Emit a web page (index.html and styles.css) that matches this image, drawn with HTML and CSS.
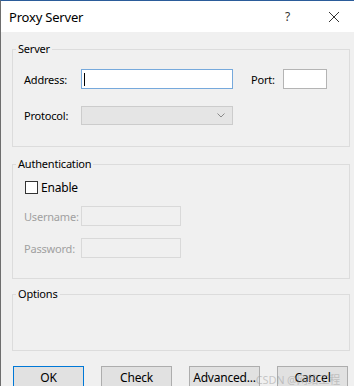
FILE: index.html
```html
<!DOCTYPE html>
<html lang="en">
<head>
    <meta charset="UTF-8">
    <title>Proxy Server</title>
    <link rel="stylesheet" href="styles.css">
</head>
<body>
    <div class="window">
        <div class="titlebar">
            <span class="title">Proxy Server</span>
            <span class="help">?</span>
            <span class="close">
                <svg width="12" height="12" viewBox="0 0 12 12"><path d="M1 1L11 11M11 1L1 11" stroke="#333" stroke-width="1" fill="none"/></svg>
            </span>
        </div>
        <div class="dialog">
            <fieldset class="group server">
                <legend>Server</legend>
                <div class="row">
                    <label class="lbl">Address:</label>
                    <div class="field wide focused"><span class="caret"></span></div>
                    <label class="lbl port-lbl">Port:</label>
                    <div class="field port"></div>
                </div>
                <div class="row protocol-row">
                    <label class="lbl">Protocol:</label>
                    <div class="combo">
                        <svg width="8" height="5" viewBox="0 0 8 5"><path d="M0.5 0.5L4 4L7.5 0.5" stroke="#8a8a8a" stroke-width="1" fill="none"/></svg>
                    </div>
                </div>
            </fieldset>

            <fieldset class="group auth">
                <legend>Authentication</legend>
                <div class="check-row">
                    <span class="checkbox"></span>
                    <span class="check-text">Enable</span>
                </div>
                <div class="row user-row">
                    <label class="lbl disabled">Username:</label>
                    <div class="field small off"></div>
                </div>
                <div class="row pass-row">
                    <label class="lbl disabled">Password:</label>
                    <div class="field small off"></div>
                </div>
            </fieldset>

            <fieldset class="group options">
                <legend>Options</legend>
            </fieldset>

            <div class="buttons">
                <button class="btn default">OK</button>
                <button class="btn">Check</button>
                <button class="btn">Advanced...</button>
                <button class="btn">Cancel</button>
            </div>
            <div class="watermark">CSDN @网络工程</div>
        </div>
    </div>
</body>
</html>
```
FILE: styles.css
```css
body {
    margin: 0;
    padding: 0;
    overflow: hidden;
    font-family: 'Noto Sans', 'Noto Sans CJK SC', sans-serif;
    font-size: 11px;
    letter-spacing: -0.2px;
    color: #000;
}
.window {
    position: relative;
    height: 386px;
    box-sizing: border-box;
    border-top: 1px solid #2b5c9a;
    border-left: 1px solid #6e6e6e;
    background-color: #f0f0f0;
}
.titlebar {
    height: 31px;
    background-color: #fff;
    display: flex;
    align-items: center;
    padding-left: 8px;
}
.title {
    font-size: 13px;
    flex-grow: 1;
}
.help {
    font-size: 12px;
    color: #333;
    margin-right: 38px;
}
.close {
    display: flex;
    margin-right: 14px;
}
.dialog {
    padding-top: 10px;
}
.group {
    margin: 0 4px 0 11px;
    padding: 0;
    border: 1px solid #dcdcdc;
}
.group legend {
    margin-left: 3px;
    padding: 0 2px;
    font-size: 11px;
    line-height: 14px;
}
.row {
    display: flex;
    align-items: center;
    padding-left: 11px;
}
.lbl {
    width: 57px;
    flex-shrink: 0;
}
.lbl.disabled {
    color: #a0a0a0;
}
.port-lbl {
    width: 32px;
    margin-left: 18px;
}
.field {
    height: 20px;
    box-sizing: border-box;
    background-color: #fff;
    border: 1px solid #b4b4b4;
    position: relative;
}
.field.wide {
    width: 152px;
}
.field.focused {
    border-color: #76a9dc;
}
.field.port {
    width: 44px;
}
.field.small {
    width: 100px;
}
.field.off {
    background-color: #f0f0f0;
    border-color: #d9d9d9;
}
.caret {
    position: absolute;
    left: 2px;
    top: 3px;
    width: 1px;
    height: 13px;
    background-color: #000;
}
.server {
    padding-top: 13px;
    padding-bottom: 21px;
}
.protocol-row {
    margin-top: 17px;
}
.combo {
    width: 152px;
    height: 19px;
    box-sizing: border-box;
    background-color: #e5e5e5;
    border: 1px solid #cccccc;
    display: flex;
    align-items: center;
    justify-content: flex-end;
    padding-right: 7px;
}
.auth {
    margin-top: 10px;
    padding-top: 9px;
    padding-bottom: 20px;
}
.check-row {
    display: flex;
    align-items: center;
    padding-left: 12px;
    height: 14px;
}
.checkbox {
    width: 11px;
    height: 11px;
    border: 1px solid #333;
    background-color: #fff;
    margin-right: 3px;
}
.check-text {
    font-size: 12px;
}
.user-row {
    margin-top: 12px;
}
.pass-row {
    margin-top: 12px;
}
.options {
    margin-top: 8px;
    height: 62px;
}
.buttons {
    display: flex;
    gap: 17px;
    margin: 15px 0 0 12px;
}
.btn {
    width: 71px;
    height: 23px;
    padding: 0;
    font-family: inherit;
    font-size: 12px;
    letter-spacing: -0.2px;
    color: #000;
    background-color: #e1e1e1;
    border: 1px solid #adadad;
}
.btn.default {
    border-color: #0078d7;
}
.watermark {
    position: absolute;
    right: 14px;
    bottom: -1px;
    font-size: 11px;
    color: rgba(160, 160, 160, 0.55);
    pointer-events: none;
}
```
